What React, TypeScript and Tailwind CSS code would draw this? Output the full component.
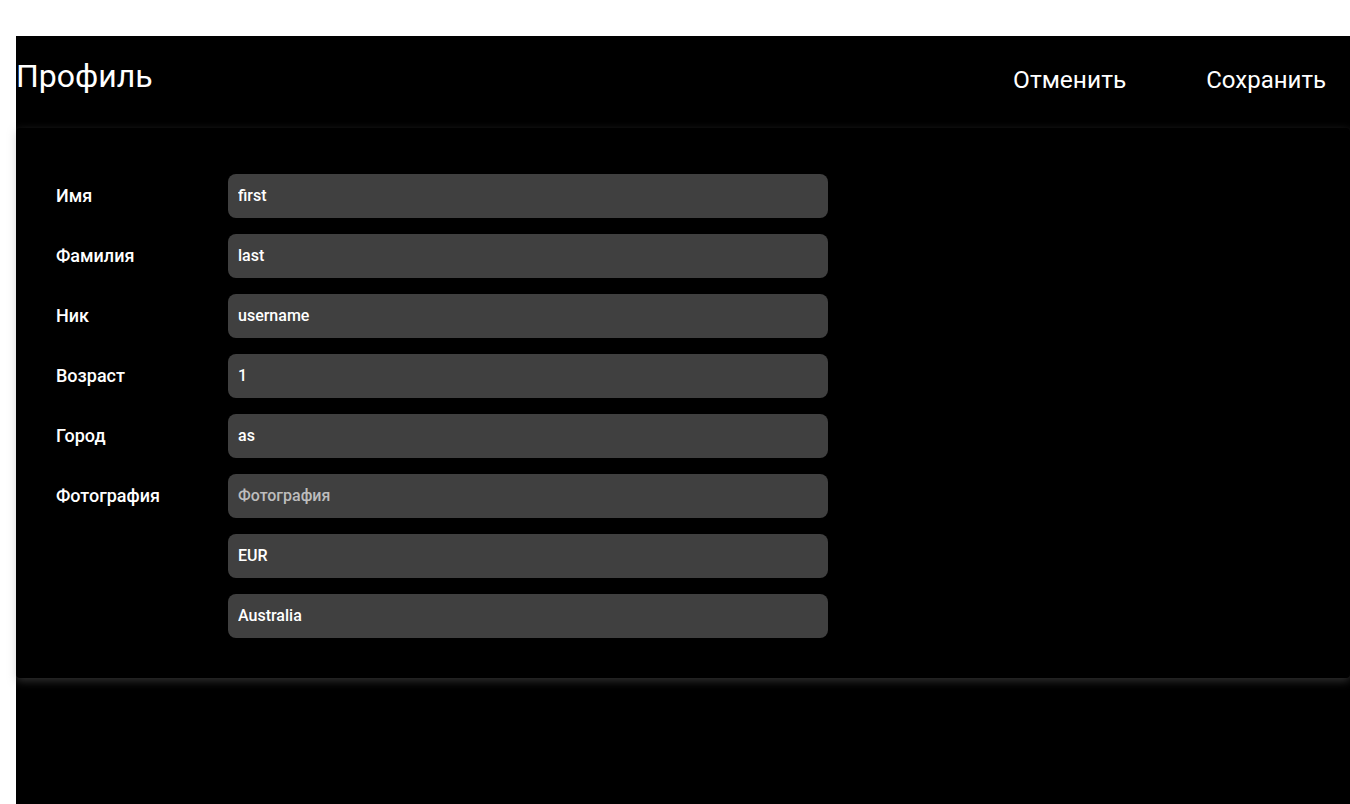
import React from 'react';

type Field = { label: string; value: string; placeholder?: string };

const fields: Field[] = [
  { label: 'Имя', value: 'first' },
  { label: 'Фамилия', value: 'last' },
  { label: 'Ник', value: 'username' },
  { label: 'Возраст', value: '1' },
  { label: 'Город', value: 'as' },
  { label: 'Фотография', value: '', placeholder: 'Фотография' },
  { label: '', value: 'EUR' },
  { label: '', value: 'Australia' },
];

const App: React.FC = () => {
  return (
    <div className="min-h-screen bg-white pt-9 pl-4 font-['Roboto',sans-serif]">
      <div className="min-h-[768px] bg-black text-white">
        <header className="flex items-start justify-between h-[92px]">
          <h1 className="text-[32px] leading-10 font-normal pt-[20px]">Профиль</h1>
          <div className="flex gap-20 pr-6 pt-[28px]">
            <button className="text-[24.5px] leading-8 font-normal">Отменить</button>
            <button className="text-2xl leading-8 font-normal">Сохранить</button>
          </div>
        </header>

        <section className="rounded-[4px] bg-black shadow-[0_3px_10px_rgba(140,140,140,0.35)] pl-10 pt-[46px] pb-10">
          <div className="flex flex-col gap-4">
            {fields.map((f, i) => (
              <div key={i} className="flex items-center">
                <div className="w-[172px] text-lg font-medium">{f.label}</div>
                <input
                  readOnly
                  value={f.value}
                  placeholder={f.placeholder}
                  className="w-[600px] h-11 rounded-lg bg-[#404040] px-2.5 pb-px text-base font-medium text-white placeholder:text-[#bdbdbd] outline-none"
                />
              </div>
            ))}
          </div>
        </section>
      </div>
    </div>
  );
};

export default App;
